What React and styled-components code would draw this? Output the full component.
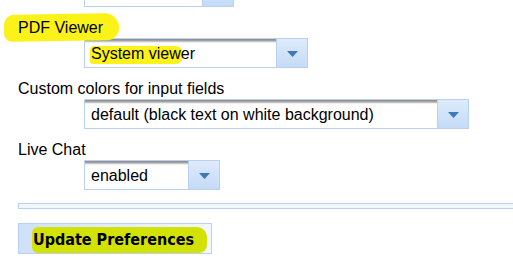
import styled, { createGlobalStyle } from 'styled-components';

const Global = createGlobalStyle`
    html, body { margin: 0; padding: 0; background: #fff; }
    body { font-family: "Liberation Sans", Arial, sans-serif; overflow: hidden; }
`

const Page = styled.div`
    width: 513px;
    height: 270px;
    overflow: hidden;
    padding-left: 18px;
    box-sizing: border-box;
`

const Form = styled.div`
    display: flex;
    flex-direction: column;
    gap: 12px;
    margin-top: -23px;
`

const Field = styled.div`
    display: flex;
    flex-direction: column;
    align-items: flex-start;
`

const Label = styled.div`
    font-size: 16px;
    line-height: 18px;
    height: 19px;
    color: #000;
`

const Mark = styled.span`
    position: relative;
    z-index: 0;
    &::before {
        content: "";
        position: absolute;
        z-index: -1;
        left: ${p => p.$l}px;
        right: ${p => p.$r}px;
        top: ${p => p.$t}px;
        bottom: ${p => p.$b}px;
        background: ${p => p.$color || '#fbf21a'};
        border-radius: ${p => p.$radius || '10px 14px 12px 8px'};
        transform: rotate(${p => p.$rot || 0}deg);
    }
`

const Select = styled.div`
    margin-left: 66px;
    width: ${p => p.$w}px;
    height: 30px;
    box-sizing: border-box;
    border: 1px solid #b9d1f0;
    display: flex;
    background: #fff;
`

const SelectText = styled.div`
    flex: 1;
    padding: 4px 0 0 6px;
    font-size: 16px;
    line-height: 22px;
    color: #000;
    white-space: nowrap;
    overflow: hidden;
    background: linear-gradient(to bottom, #8c8c8c 0, #a9a9a9 2px, #e0e0e0 3px, #fff 4px);
`

const ArrowBox = styled.div`
    width: 31px;
    border-left: 1px solid #b9d1f0;
    background: linear-gradient(to bottom, #deebfb, #c4dbf7);
    display: flex;
    align-items: center;
    justify-content: center;
    padding-top: 2px;
    box-sizing: border-box;
`

const Rule = styled.div`
    margin-top: 1px;
    height: 6px;
    box-sizing: border-box;
    border: 1px solid #b9d1f0;
    border-right: none;
    background: #f2f7fe;
`

const Button = styled.button`
    align-self: flex-start;
    margin-top: 2px;
    width: 194px;
    height: 31px;
    box-sizing: border-box;
    border: 1px solid #b9d1f0;
    background: linear-gradient(to right, #cfe1f8, #f3f8fe);
    font-family: "DejaVu Sans Condensed", "DejaVu Sans", Verdana, sans-serif;
    font-stretch: condensed;
    font-weight: bold;
    font-size: 16px;
    color: #000;
    padding: 2px 3px 0 0;
    text-align: center;
`

const Arrow = () => (
    <svg width="11" height="6" viewBox="0 0 11 6">
        <path d="M0 0 H11 L5.5 6 Z" fill="#3f78b2" />
    </svg>
)

const Dropdown = ({ w, children }) => (
    <Select $w={w}>
        <SelectText>{children}</SelectText>
        <ArrowBox><Arrow /></ArrowBox>
    </Select>
)

const App = () => {
    return (
        <Page>
            <Global />
            <Form>
                <Dropdown w={150}>&nbsp;</Dropdown>
                <Field>
                    <Label><Mark $l={-14} $r={-16} $t={-5} $b={-5} $rot={-1}>PDF Viewer</Mark></Label>
                    <Dropdown w={224}>
                        <Mark $l={-1} $r={8} $t={1} $b={-2} $radius="4px 6px 6px 3px">System viewe</Mark>r
                    </Dropdown>
                </Field>
                <Field>
                    <Label>Custom colors for input fields</Label>
                    <Dropdown w={385}>default (black text on white background)</Dropdown>
                </Field>
                <Field>
                    <Label>Live Chat</Label>
                    <Dropdown w={136}>enabled</Dropdown>
                </Field>
                <Rule />
                <Button>
                    <Mark $l={-1} $r={-13} $t={-3} $b={-4} $color="#d3e205" $radius="6px 10px 8px 6px">Update Preferences</Mark>
                </Button>
            </Form>
        </Page>
    );
}

export default App;
